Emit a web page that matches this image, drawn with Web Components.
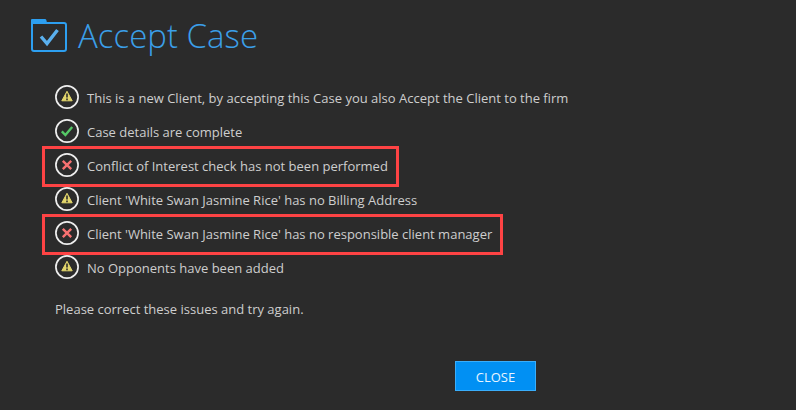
<!DOCTYPE html>
<html lang="en">
<head>
<meta charset="utf-8">
<title>Accept Case</title>
<style>
html{background:#2b2b2b}
body{margin:0;min-height:100vh;background:#2b2b2b;color:#cecece;font:13px/24px "Open Sans","Noto Sans",sans-serif}
</style>
</head>
<body>
<case-dialog heading="Accept Case">
  <case-check status="warning">This is a new Client, by accepting this Case you also Accept the Client to the firm</case-check>
  <case-check status="ok">Case details are complete</case-check>
  <case-check status="error" flagged>Conflict of Interest check has not been performed</case-check>
  <case-check status="warning">Client 'White Swan Jasmine Rice' has no Billing Address</case-check>
  <case-check status="error" flagged>Client 'White Swan Jasmine Rice' has no responsible client manager</case-check>
  <case-check status="warning">No Opponents have been added</case-check>
  <span slot="note">Please correct these issues and try again.</span>
  <close-button slot="actions">CLOSE</close-button>
</case-dialog>
<script>
class StatusIcon extends HTMLElement{
  connectedCallback(){
    const marks={
      warning:'<path d="M12 6.3 17.2 15.8H6.8Z" fill="#e3d66c" stroke="#e3d66c" stroke-width="1" stroke-linejoin="round"/><path d="M12 8.5V12.6M12 13.6v1.6" stroke="#2b2b2b" stroke-width="1.6"/>',
      ok:'<path d="M6.8 12.3 10.4 16 17.2 8" fill="none" stroke="#55c866" stroke-width="2.4"/>',
      error:'<path d="M7.8 7.8 16.2 16.2M16.2 7.8 7.8 16.2" stroke="#f87171" stroke-width="2.4"/>'
    };
    this.attachShadow({mode:'open'}).innerHTML=`<style>:host{display:block;flex:none;width:24px;height:24px}svg{display:block}</style>
    <svg width="24" height="24" viewBox="0 0 24 24" aria-hidden="true"><circle cx="12" cy="12" r="11.1" fill="none" stroke="#eee" stroke-width="1.7"/>${marks[this.getAttribute('status')]}</svg>`;
  }
}
customElements.define('status-icon',StatusIcon);

class CaseCheck extends HTMLElement{
  connectedCallback(){
    this.attachShadow({mode:'open'}).innerHTML=`<style>
    :host{display:flex;align-items:center;gap:8px;position:relative;width:fit-content;min-height:24px}
    :host([flagged])::after{content:"";position:absolute;inset:-7px -11px -10px -13px;border:3px solid #fe4344;pointer-events:none}
    span{padding-top:2px;line-height:22px}
    </style><status-icon status="${this.getAttribute('status')}"></status-icon><span><slot></slot></span>`;
  }
}
customElements.define('case-check',CaseCheck);

class CloseButton extends HTMLElement{
  connectedCallback(){
    this.attachShadow({mode:'open'}).innerHTML=`<style>
    :host{display:block}
    button{font:inherit;line-height:20px;color:#e9f5ff;background:#0190f3;border:1px solid #3aaefb;padding:5px 19px 3px;min-width:81px;height:30px;cursor:pointer}
    </style><button type="button"><slot></slot></button>`;
  }
}
customElements.define('close-button',CloseButton);

class CaseDialog extends HTMLElement{
  connectedCallback(){
    this.attachShadow({mode:'open'}).innerHTML=`<style>
    :host{display:flex;flex-direction:column;box-sizing:border-box;padding:12px 30px 19px}
    header{display:flex;align-items:center;gap:10px;color:#3b9fe8}
    h1{margin:0;font:300 33px/48px "Open Sans Light","Open Sans",sans-serif}
    .checks{display:flex;flex-direction:column;gap:10px;padding:25px 25px 0}
    p{margin:0;padding:18px 25px 0}
    footer{display:flex;justify-content:flex-end;padding:40px 230px 0 0}
    </style>
    <header><svg width="38" height="36" viewBox="0 0 38 36" aria-hidden="true"><path d="M2 6V31Q2 33 4 33H34Q36 33 36 31V7Q36 5 34 5H16" fill="none" stroke="#2d9ff0" stroke-width="2"/><path d="M1 1.5Q1 1 2 1H15Q16 1 16.3 2L17.3 6H1Z" fill="#2d9ff0"/><path d="M11 18.5 17 25.5 27.5 12" fill="none" stroke="#5ab0ee" stroke-width="3.4"/></svg><h1>${this.getAttribute('heading')}</h1></header>
    <div class="checks"><slot></slot></div>
    <p><slot name="note"></slot></p>
    <footer><slot name="actions"></slot></footer>`;
  }
}
customElements.define('case-dialog',CaseDialog);
</script>
</body>
</html>
